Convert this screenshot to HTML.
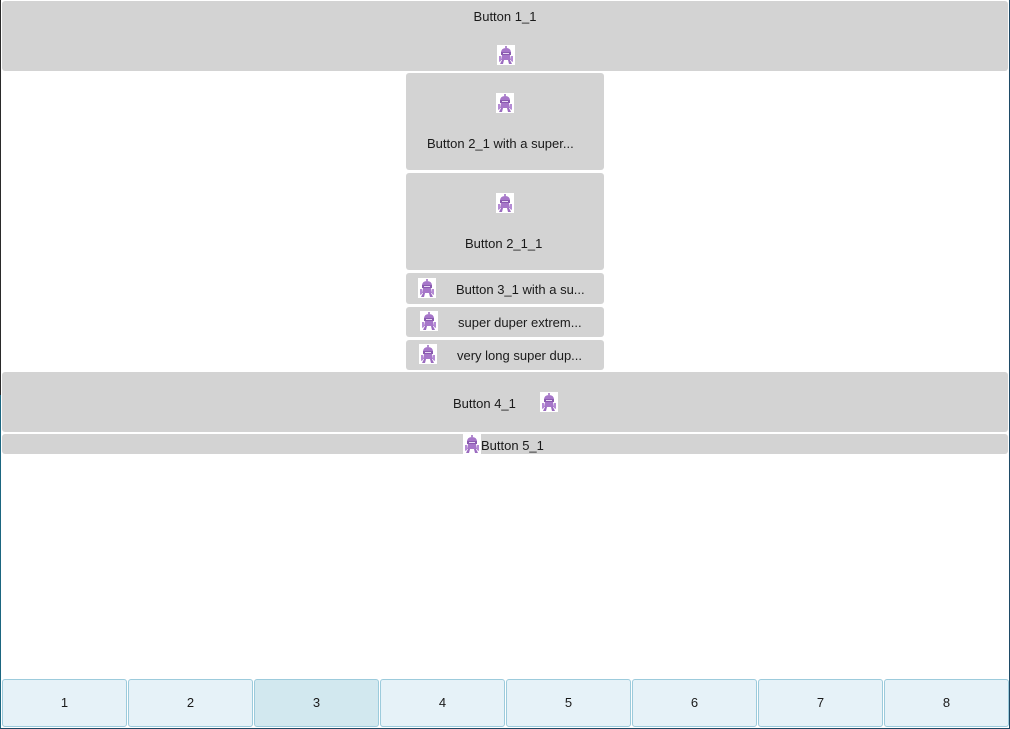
<!DOCTYPE html>
<html><head><meta charset="utf-8"><style>
html,body{margin:0;padding:0;}
body{width:1010px;height:729px;position:relative;overflow:hidden;background:#fff;font-family:"Segoe UI","Liberation Sans",sans-serif;font-size:13px;color:#1a1a1a;}
.lb{position:absolute;left:0;top:0;width:1px;height:729px;background:linear-gradient(#2a2a2a 0,#2a2a2a 395px,#1b6680 395px,#1b6680 729px);}
.rb{position:absolute;right:0;top:0;width:1px;height:729px;background:#1e4a66;}
.bb{position:absolute;left:0;bottom:0;width:1010px;height:1px;background:#1e4a66;}
.b{position:absolute;background:#d3d3d3;border-radius:3px;}
.t{position:absolute;white-space:nowrap;line-height:16px;}
.i{position:absolute;width:18px;height:20px;}
.tab{position:absolute;box-sizing:border-box;top:679px;width:125px;height:48px;background:#e6f2f8;border:1px solid #9ccbdc;border-radius:3px;text-align:center;line-height:46px;font-size:13px;}
</style></head><body>
<svg width="0" height="0" style="position:absolute"><defs>
<symbol id="r" viewBox="0 0 18 20">
<rect width="18" height="20" fill="#fff"/>
<circle cx="9" cy="2" r="1" fill="#9b6bc0"/>
<path d="M4 8 Q4 3 9 3 Q14 3 14 8 Z" fill="#a676c9"/>
<rect x="4" y="7" width="10" height="3" fill="#8a5bb0"/>
<rect x="6" y="8" width="6" height="1" fill="#e8d8f4"/>
<path d="M5 10 H13 L14 15 H4 Z" fill="#a676c9"/>
<path d="M2 11 L4 11 L4 16 L2 17 Z M14 11 L16 11 L16 17 L14 16 Z" fill="#b48ad4"/>
<path d="M5 15 L7 15 L6 19 L3 19 Z M11 15 L13 15 L15 19 L12 19 Z" fill="#9b6bc0"/>
</symbol></defs></svg>
<div class="lb"></div><div class="rb"></div><div class="bb"></div>

<div class="b" style="left:2px;top:1px;width:1006px;height:70px"></div>
<div class="t" style="left:0;width:1010px;text-align:center;top:9px">Button 1_1</div>
<svg class="i" style="left:497px;top:45px"><use href="#r"/></svg>

<div class="b" style="left:406px;top:73px;width:198px;height:97px"></div>
<svg class="i" style="left:496px;top:93px"><use href="#r"/></svg>
<div class="t" style="left:427px;top:136px">Button 2_1 with a super...</div>

<div class="b" style="left:406px;top:173px;width:198px;height:97px"></div>
<svg class="i" style="left:496px;top:193px"><use href="#r"/></svg>
<div class="t" style="left:465px;top:236px">Button 2_1_1</div>

<div class="b" style="left:406px;top:273px;width:198px;height:31px"></div>
<svg class="i" style="left:418px;top:278px"><use href="#r"/></svg>
<div class="t" style="left:456px;top:282px">Button 3_1 with a su...</div>

<div class="b" style="left:406px;top:307px;width:198px;height:30px"></div>
<svg class="i" style="left:420px;top:311px"><use href="#r"/></svg>
<div class="t" style="left:458px;top:315px">super duper extrem...</div>

<div class="b" style="left:406px;top:340px;width:198px;height:30px"></div>
<svg class="i" style="left:419px;top:344px"><use href="#r"/></svg>
<div class="t" style="left:457px;top:348px">very long super dup...</div>

<div class="b" style="left:2px;top:372px;width:1006px;height:60px"></div>
<div class="t" style="left:453px;top:396px">Button 4_1</div>
<svg class="i" style="left:540px;top:392px"><use href="#r"/></svg>

<div class="b" style="left:2px;top:434px;width:1006px;height:20px"></div>
<svg class="i" style="left:463px;top:434px"><use href="#r"/></svg>
<div class="t" style="left:481px;top:438px">Button 5_1</div>

<div class="tab" style="left:2px">1</div>
<div class="tab" style="left:128px">2</div>
<div class="tab" style="left:254px;background:#d2e8ef">3</div>
<div class="tab" style="left:380px">4</div>
<div class="tab" style="left:506px">5</div>
<div class="tab" style="left:632px">6</div>
<div class="tab" style="left:758px">7</div>
<div class="tab" style="left:884px">8</div>
</body></html>
